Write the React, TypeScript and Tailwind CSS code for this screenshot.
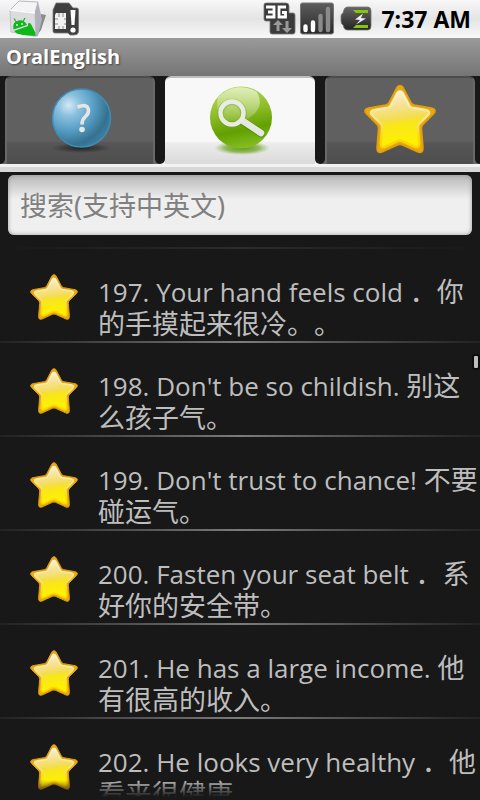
import React, { useId, useState } from "react";

const phrases = [
  { id: 197, en: "Your hand feels cold", zh: "．你的手摸起来很冷。。" },
  { id: 198, en: "Don't be so childish.", zh: "别这么孩子气。" },
  { id: 199, en: "Don't trust to chance!", zh: "不要碰运气。" },
  { id: 200, en: "Fasten your seat belt", zh: "．系好你的安全带。" },
  { id: 201, en: "He has a large income.", zh: "他有很高的收入。" },
  { id: 202, en: "He looks very healthy", zh: "．他看来很健康。" },
];

const starPath =
  "M36 2.5 Q38.5 2.5 40 6 L47 19.5 Q48 21.5 50.5 22 L67.5 25 Q73.5 26.5 69.5 31 L59 41.5 Q57.5 43 57.5 45.5 L59 64 Q59.5 71 54 69 L38.5 62 Q36 61 33.5 62 L18 69 Q12.5 71 13 64 L14.5 45.5 Q14.5 43 13 41.5 L2.5 31 Q-1.5 26.5 4.5 25 L21.5 22 Q24 21.5 25 19.5 L32 6 Q33.5 2.5 36 2.5Z";

function StarIcon({ className }: { className: string }) {
  const id = useId();
  return (
    <svg viewBox="0 0 72 72" className={className} aria-hidden="true">
      <defs>
        <linearGradient id={`${id}f`} x1="0" y1="0" x2="0.15" y2="1">
          <stop offset="0" stopColor="#fbf3dc" />
          <stop offset="0.3" stopColor="#f6e29a" />
          <stop offset="0.55" stopColor="#f3dd50" />
          <stop offset="0.62" stopColor="#f8e51c" />
          <stop offset="1" stopColor="#fff200" />
        </linearGradient>
        <linearGradient id={`${id}i`} x1="0" y1="0" x2="0" y2="1">
          <stop offset="0" stopColor="#fdf3d2" />
          <stop offset="0.5" stopColor="#f9e28a" />
          <stop offset="0.85" stopColor="#fbd800" />
        </linearGradient>
      </defs>
      <path d={starPath} fill="#e9aa10" stroke="#dd9d0c" strokeWidth="1.5" />
      <g transform="translate(36 38) scale(0.83) translate(-36 -38)">
        <path d={starPath} fill={`url(#${id}f)`} stroke={`url(#${id}i)`} strokeWidth="3" />
      </g>
    </svg>
  );
}

function HelpIcon() {
  return (
    <svg viewBox="0 0 72 72" className="size-[72px]" aria-hidden="true">
      <defs>
        <radialGradient id="ball" cx="0.28" cy="0.28" r="0.85">
          <stop offset="0" stopColor="#d3e9f5" />
          <stop offset="0.22" stopColor="#8cc1de" />
          <stop offset="0.5" stopColor="#589fc6" />
          <stop offset="0.8" stopColor="#35718f" />
          <stop offset="1" stopColor="#3f86aa" />
        </radialGradient>
        <radialGradient id="ballShade">
          <stop offset="0" stopColor="#222" />
          <stop offset="1" stopColor="#222" stopOpacity="0" />
        </radialGradient>
      </defs>
      <ellipse cx="37" cy="65" rx="30" ry="5" fill="url(#ballShade)" />
      <circle cx="37.5" cy="35" r="29" fill="url(#ball)" stroke="#3f8db5" strokeWidth="1.5" />
      <path
        d="M33.5 24 Q44 20 44.5 27.5 Q44.5 31 41 34 Q38 36.5 38 41.5"
        fill="none"
        stroke="#e6e6e3"
        strokeWidth="3.6"
      />
      <circle cx="38" cy="46.5" r="2.8" fill="#e6e6e3" />
    </svg>
  );
}

function SearchIcon() {
  return (
    <svg viewBox="0 0 72 72" className="size-[72px]" aria-hidden="true">
      <defs>
        <linearGradient id="green" x1="0.3" y1="0" x2="0.5" y2="1">
          <stop offset="0" stopColor="#b6d957" />
          <stop offset="0.4" stopColor="#8fbe2a" />
          <stop offset="0.72" stopColor="#62a000" />
          <stop offset="1" stopColor="#86bd22" />
        </linearGradient>
        <linearGradient id="gloss" x1="0.6" y1="0" x2="0.4" y2="1">
          <stop offset="0" stopColor="#fff" stopOpacity="0.6" />
          <stop offset="1" stopColor="#fff" stopOpacity="0.1" />
        </linearGradient>
        <radialGradient id="greenShade">
          <stop offset="0" stopColor="#5f9a10" />
          <stop offset="0.6" stopColor="#7aad3a" stopOpacity="0.8" />
          <stop offset="1" stopColor="#8fbc5a" stopOpacity="0" />
        </radialGradient>
      </defs>
      <ellipse cx="38" cy="65" rx="28" ry="7" fill="url(#greenShade)" />
      <circle cx="37" cy="34.5" r="31" fill="url(#green)" />
      <path d="M14 14 A31 31 0 0 1 53 9 Q60 22 50 31 Q39 42 22 37 Q10 30 14 14Z" fill="url(#gloss)" />
      <g fill="none" strokeLinecap="round">
        <circle cx="28" cy="30.5" r="11.5" stroke="#6c9c20" strokeWidth="6.5" opacity="0.35" />
        <path d="M39 38.5 L57 50.5" stroke="#4c8500" strokeWidth="8.5" opacity="0.4" />
        <path d="M39 38 L57 50" stroke="#e5e8e2" strokeWidth="6.5" />
        <circle cx="28" cy="30" r="11.5" stroke="#e9ece5" strokeWidth="4.4" />
      </g>
    </svg>
  );
}

function BoxIcon() {
  return (
    <svg viewBox="0 0 38 38" className="size-[38px]" aria-hidden="true">
      <path d="M30 34 L33 14 L38 15 L33 30Z" fill="#8a8a8a" />
      <path d="M2 10 L11 1 L30 2 L27 13Z" fill="#f4f4f6" stroke="#a9a9ad" strokeWidth="0.8" />
      <path d="M2 10 L27 13 L28 36.5 L3 32Z" fill="#dcdce0" stroke="#aaa" strokeWidth="0.6" />
      <path d="M27 13 L30 2 L34 19 L30 36 L28 36.5Z" fill="#b0b1ba" />
      <path d="M2 10 L27 13" stroke="#fff" strokeWidth="1.4" />
      <path d="M5.5 29.500 Q4 21.5 10.5 20.5 Q16 19.5 19 25Z" fill="#0cb81a" />
      <path d="M8 21.5 L6 18.5 M15 21.5 L17 18" stroke="#0cb81a" strokeWidth="1.2" />
      <circle cx="9" cy="25" r="0.9" fill="#fff" />
      <circle cx="14" cy="24" r="0.9" fill="#fff" />
      <path d="M6 31 L20 26 L20 23.5 Q22 22 23.5 25 L27.500 33 V36 L15 35 L9 33.5Z" fill="#0cb81a" />
    </svg>
  );
}

function SimIcon() {
  return (
    <svg viewBox="0 0 28 34" className="h-[34px] w-[28px]" aria-hidden="true">
      <path d="M4 1 H17 L21 6 H25 Q26.5 6 26.5 8 V30 Q26 33 22 33 H18 L16 31 H3 Q1 31 1 29 V8Z" fill="#3f3f3f" stroke="#777" strokeWidth="0.8" />
      <path d="M4 11 H14 V27 H3 V13Z" fill="#f2f2f2" />
      <path d="M7 11 V15 M11 11 V15 M3 17 H6 M3 22 H6 M7 27 V24 M11 27 V24 M12 17 H14 M12 22 H14" stroke="#888" strokeWidth="1" />
      <path d="M18.5 8 H23.5 L22.5 23 H19.5Z" fill="#fff" />
      <circle cx="21" cy="28" r="2.6" fill="#fff" />
    </svg>
  );
}

function NetworkIcon() {
  return (
    <svg viewBox="0 0 34 34" className="size-[34px]" aria-hidden="true">
      <path d="M3 1 H23 Q26 1 26 4 V11 H30 Q32 11 32 13 V30 Q32 32 30 32 H9 Q7 32 7 30 V19 H3 Q1 19 1 17 V3 Q1 1 3 1Z" fill="#3b3b3b" stroke="#777" strokeWidth="0.8" />
      <g fill="none" stroke="#fff" strokeWidth="2.8">
        <path d="M3 5 H11 V15 H3 M5 10 H11" />
        <path d="M23 5 H16 V15 H22.5 V10.5 H19" />
      </g>
      <path d="M15 18 L20 23 H16.5 V29 H13.5 V23 H10Z M24 31 L19 26 H22.5 V19 H25.5 V26 H29Z" fill="#999" />
    </svg>
  );
}

function SignalIcon() {
  return (
    <svg viewBox="0 0 34 34" className="size-[34px]" aria-hidden="true">
      <defs>
        <linearGradient id="signalBg" x1="0" y1="0" x2="0" y2="1">
          <stop offset="0" stopColor="#5c5c5c" />
          <stop offset="1" stopColor="#292929" />
        </linearGradient>
      </defs>
      <rect x="0.5" y="1" width="33" height="31" rx="2" fill="url(#signalBg)" stroke="#777" />
      <g strokeLinecap="round" strokeWidth="4.4">
        <path d="M5.5 24.5 V28 M13 20.5 V28" stroke="#fff" />
        <path d="M20.5 14 V28 M28 7 V28" stroke="#8a8a8a" />
      </g>
    </svg>
  );
}

function BatteryIcon() {
  return (
    <svg viewBox="0 0 32 26" className="h-[26px] w-[32px]" aria-hidden="true">
      <defs>
        <linearGradient id="batteryBg" x1="0" y1="0" x2="0" y2="1">
          <stop offset="0" stopColor="#666" />
          <stop offset="1" stopColor="#222" />
        </linearGradient>
      </defs>
      <path d="M7 1 H28 Q31 1 31 5 V20 Q31 24 28 24 H7 Q4 24 3 19 Q1 18 1 15 V10 Q1 8 3 7 Q4 1 7 1Z" fill="url(#batteryBg)" stroke="#777" strokeWidth="0.8" />
      <path d="M13 4 H28 V7 H16Z M13 22 H28 V19 H16Z" fill="#86c800" />
      <path d="M23 7.5 L15 13.5 L20 14 L16 18.5 L26 12.5 L21 12Z" fill="#eee" />
    </svg>
  );
}

const tabs = [
  { name: "Help", icon: <HelpIcon /> },
  { name: "Search", icon: <SearchIcon /> },
  { name: "Favourites", icon: <StarIcon className="size-[72px]" /> },
];

export default function App() {
  const [selected, setSelected] = useState(1);
  const [query, setQuery] = useState("");

  return (
    <div className="relative flex h-screen flex-col overflow-hidden bg-[#181818] font-['Open_Sans','Noto_Sans_CJK_SC',sans-serif]">
      <header className="flex h-[38px] shrink-0 items-center bg-linear-to-b from-[#f8f8f8] via-[#e4e4e4] to-[#f8f8f8] pr-[9px] pl-2">
        <BoxIcon />
        <div className="pl-[6px]">
          <SimIcon />
        </div>
        <div className="ml-auto flex items-center gap-[3px]">
          <NetworkIcon />
          <SignalIcon />
          <div className="px-[3px]">
            <BatteryIcon />
          </div>
          <time className="pl-[3px] text-[23px] leading-8 font-bold text-black">7:37 AM</time>
        </div>
      </header>

      <h1 className="h-[38px] shrink-0 bg-linear-to-b from-[#9a9a9a] to-[#757575] px-[6px] text-xl leading-[37px] font-bold text-white text-shadow-[1px_1px_2px_#444]">
        OralEnglish
      </h1>

      <nav className="shrink-0">
        <div role="tablist" className="flex">
          {tabs.map((tab, i) => {
            const on = i === selected;
            return (
              <div
                key={tab.name}
                className={`flex h-[88px] flex-1 ${on ? "bg-linear-to-b from-[#181818] from-50% to-[#f8f8f8] to-50%" : "bg-linear-to-b from-[#181818] from-50% to-[#686868] to-50%"}`}
              >
                <span className="w-[5px] rounded-br-[5px] bg-[#181818]" />
                <button
                  type="button"
                  role="tab"
                  aria-selected={on}
                  aria-label={tab.name}
                  onClick={() => setSelected(i)}
                  className={`flex flex-1 items-start justify-center rounded-t-[6px] border-t-2 pt-[5px] ${
                    on
                      ? "border-[#bdbdbd] bg-linear-to-b from-[#f8f8f8] from-73% via-[#ececec] via-76% to-[#dadada]"
                      : "border-x-2 border-x-[#686868] border-t-[#4c4c4c] bg-linear-to-b from-[#606060] from-73% via-[#575557] via-76% to-[#4e4e4e]"
                  }`}
                >
                  {tab.icon}
                </button>
                <span className="w-[5px] rounded-bl-[5px] bg-[#181818]" />
              </div>
            );
          })}
        </div>
        <div className="h-2 border-t-[3px] border-[#f2f2f2] bg-[#d8d8d8]" />
      </nav>

      <form className="h-[75px] shrink-0 px-2 pt-[3px]" onSubmit={(e) => e.preventDefault()}>
        <input
          type="search"
          aria-label="搜索"
          placeholder="搜索(支持中英文)"
          value={query}
          onChange={(e) => setQuery(e.target.value)}
          className="h-[60px] w-full appearance-none rounded-[6px] bg-linear-to-b from-[#b8b8b8] via-[#efefef] via-40% to-[#efefef] px-3 font-['Noto_Sans','Noto_Sans_CJK_SC',sans-serif] text-[27px] text-gray-700 inset-shadow-[0_0_4px_#999] outline-none placeholder:text-[#808080]"
        />
      </form>

      <ul className="min-h-0 flex-1 overflow-hidden">
        <li aria-hidden="true" className="h-[2px] bg-linear-to-r from-[#181818] via-[#2c2c2c] to-[#181818]" />
        {phrases.map((p) => (
          <li key={p.id}>
            <div className="flex h-[92px] items-end pl-[30px]">
              <StarIcon className="mb-5 size-12 shrink-0" />
              <p className="min-w-0 flex-1 pb-px pl-5 text-[26px] leading-[31px] text-[#bebebe] [text-spacing-trim:space-all]">
                {`${p.id}. ${p.en} `}
                <span className="text-[27px]">{p.zh}</span>
              </p>
            </div>
            <div className="h-[2px] bg-linear-to-r from-[#222] via-[#7c7c7c] to-[#222]" />
          </li>
        ))}
      </ul>

      <div className="pointer-events-none absolute inset-x-0 bottom-0 h-5 bg-linear-to-t from-[#181818] from-15% to-transparent" />
      <div className="pointer-events-none absolute top-[354px] right-0 h-4 w-2 rounded-[3px] border-2 border-[#0c0c0c] bg-[#bdbdbd]" />
    </div>
  );
}
